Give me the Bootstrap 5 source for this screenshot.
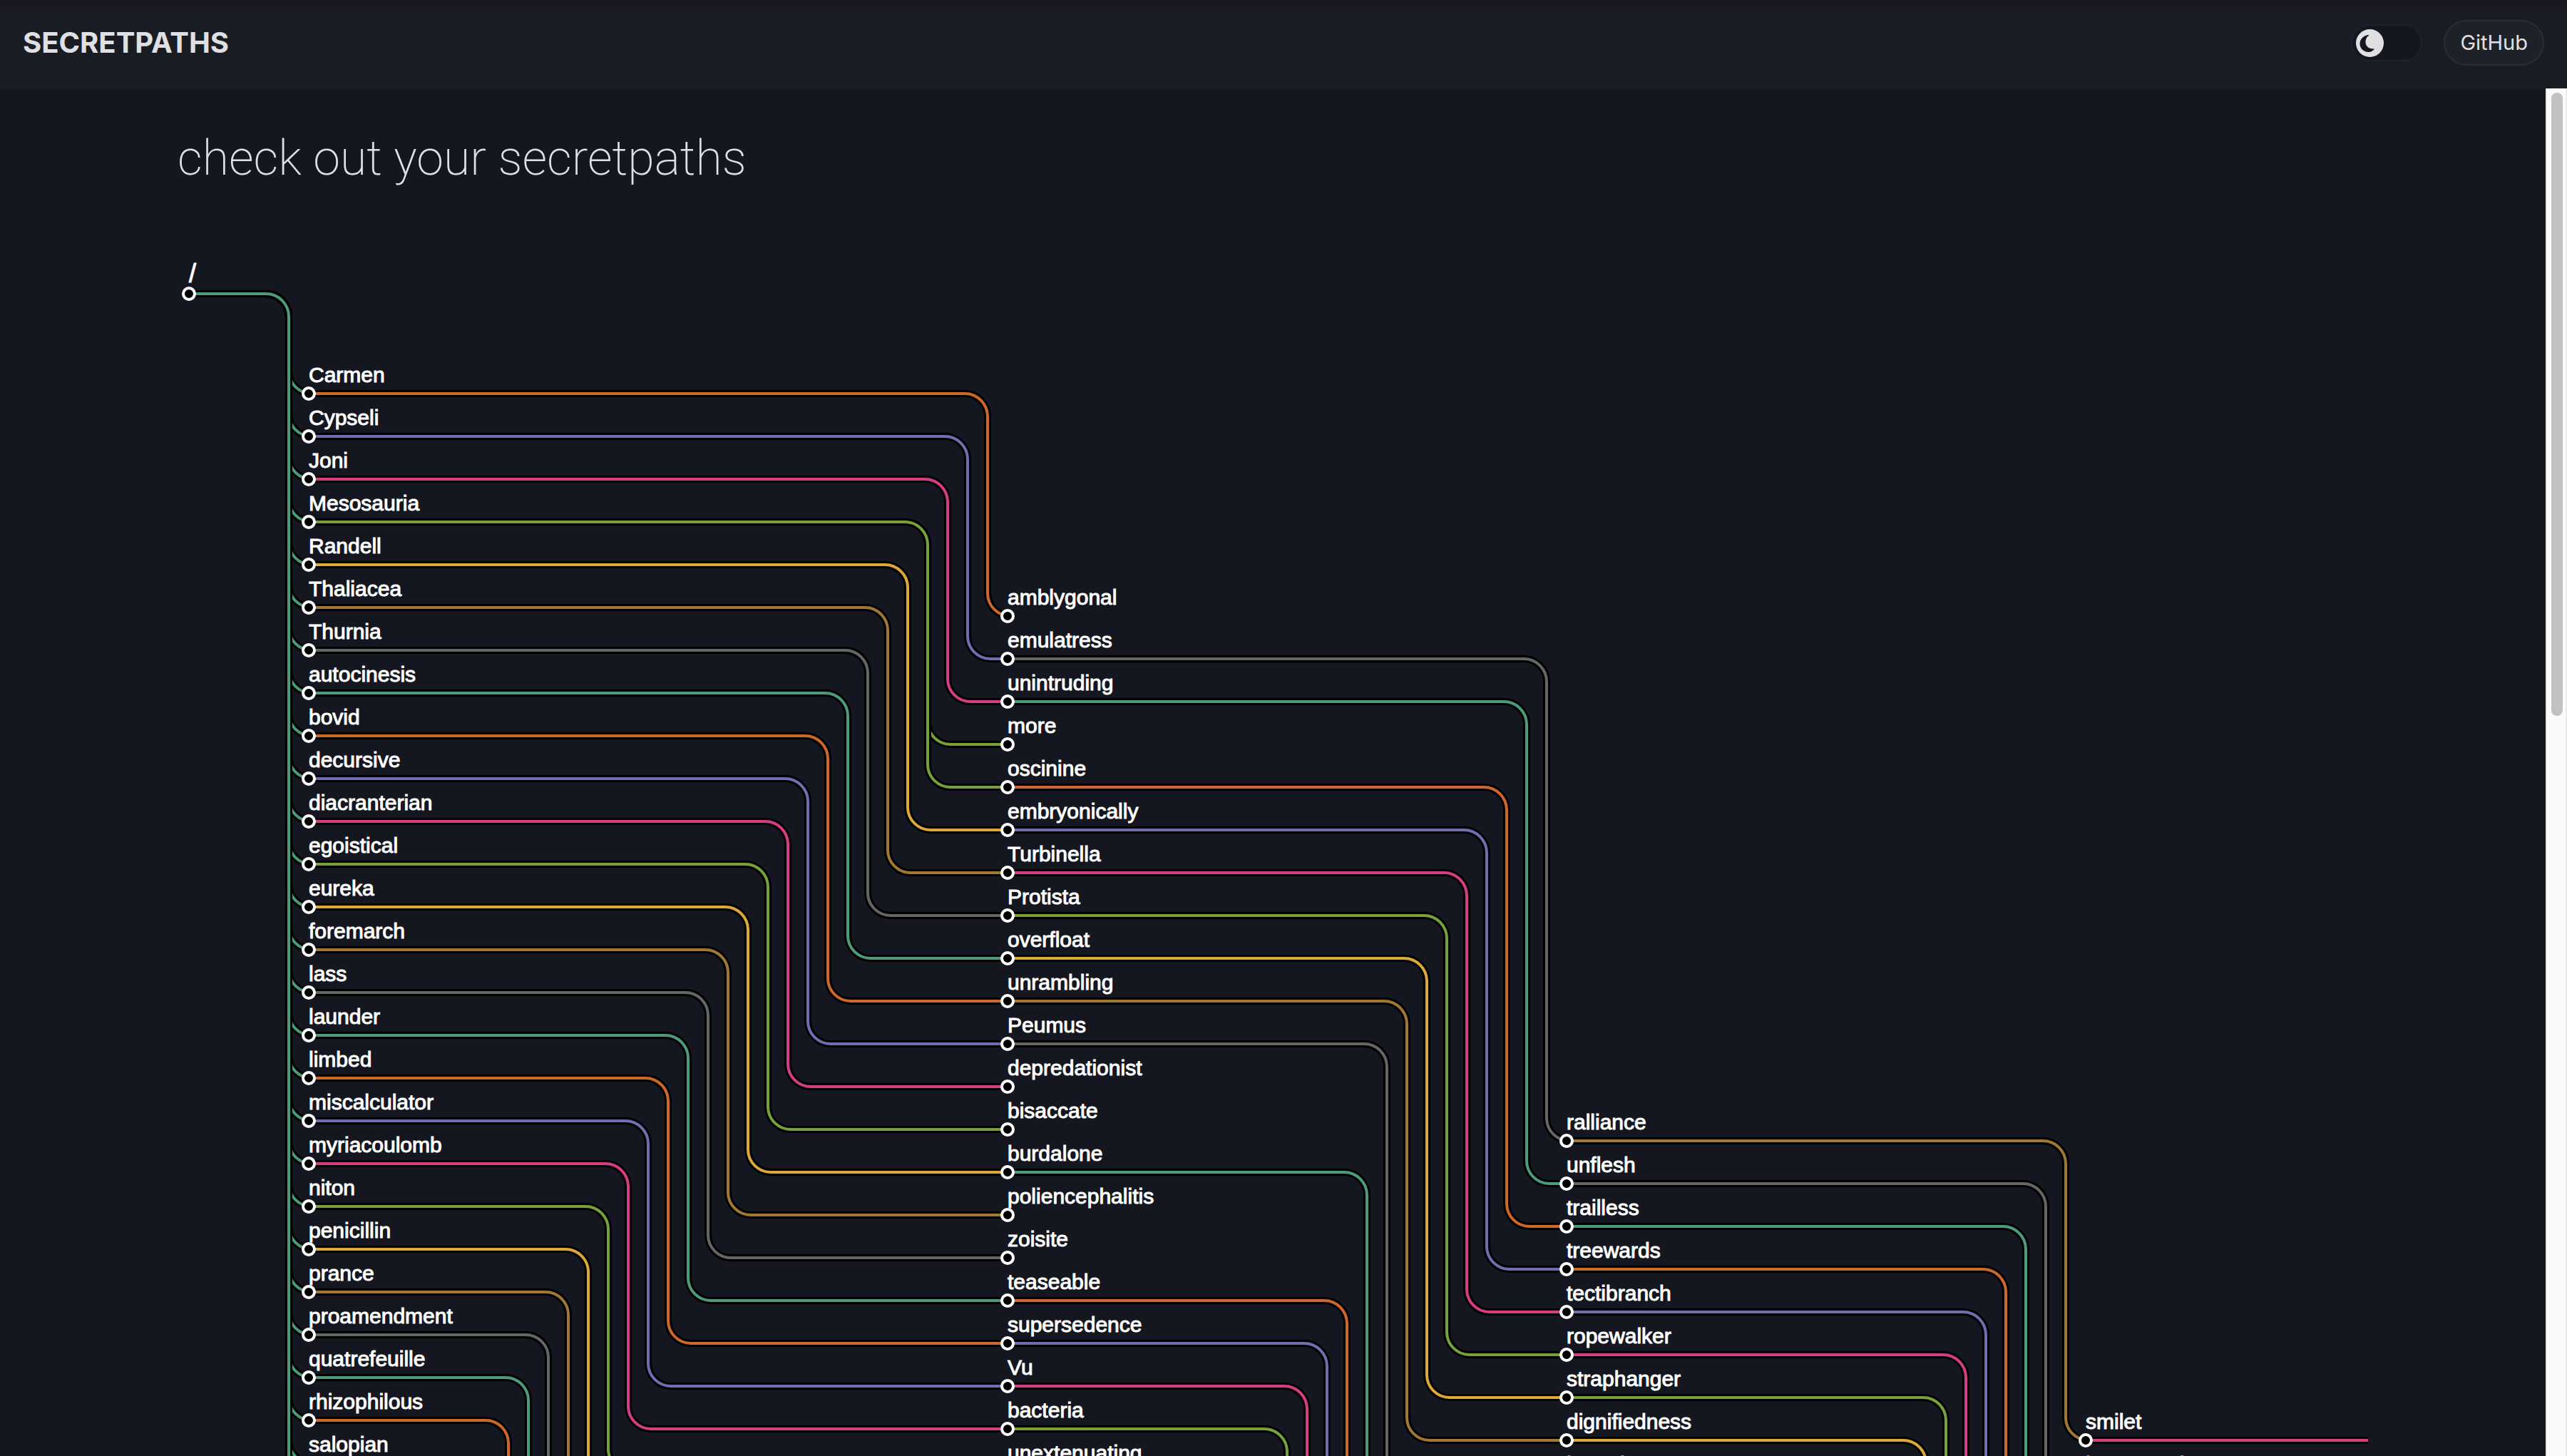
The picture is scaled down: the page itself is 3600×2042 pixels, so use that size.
<!DOCTYPE html>
<html lang="en" data-bs-theme="dark">
<head>
<meta charset="utf-8">
<meta name="viewport" content="width=device-width, initial-scale=1">
<title>secretpaths</title>
<link rel="stylesheet" href="https://cdn.jsdelivr.net/npm/bootstrap@5.3.0/dist/css/bootstrap.min.css">
<style>
  body { background: #14171f; color: #e0e0e3; font-family: Inter, "Liberation Sans", sans-serif; }
  .topbar { height: 124px; padding: 0 32px 4px; background: linear-gradient(#16151f, #1a1c24 24px); }
  .brand { font-size: 40px; line-height: 48px; font-weight: 700; color: #e0e0e3; text-decoration: none; }
  .bar-tools { gap: 30px; }
  .theme-switch { width: 100px; height: 52px; padding: 5px; background: #14171f; border: 2px solid #1f212c; border-radius: 26px; }
  .theme-switch svg { width: 39px; height: 39px; display: block; }
  .btn-pill { height: 64px; padding: 0 21px; font-size: 29px; line-height: 60px; color: #e0e0e3; background: #1f2129; border: 2px solid #2a2b3c; border-radius: 32px; }
  .page-body { min-height: 0; }
  .sheet { width: 100%; max-width: 3072px; padding-top: 56px; }
  .headline { font-family: Roboto, Inter, sans-serif; font-size: 68px; line-height: 84px; font-weight: 200; margin: 0 0 76px; color: #e0e0e3; }
  .tree { display: block; width: 100%; height: 4000px; font-family: "Liberation Sans", Arial, sans-serif; font-size: 30px; }
  .tree path { fill: none; }
  .tree text { fill: #fff; stroke: #fff; stroke-width: 1px; }
  .tree .root-label { font-size: 36px; }
  .rail { width: 30px; background: #fafafa; border-left: 2px solid #e8e8e8; border-right: 2px solid #ebebeb; padding: 6px 4px 0 6px; }
  .rail-thumb { width: 16px; height: 874px; border-radius: 8px; background: #c1c1c1; }
</style>
<script src="https://cdn.jsdelivr.net/npm/bootstrap@5.3.0/dist/js/bootstrap.bundle.min.js"></script>
</head>
<body class="vh-100 d-flex flex-column overflow-hidden">
<header class="topbar d-flex align-items-center justify-content-between flex-shrink-0">
  <a class="brand" href="#">SECRETPATHS</a>
  <div class="bar-tools d-flex align-items-center">
    <button type="button" class="theme-switch" role="switch" aria-checked="false" aria-label="Toggle theme">
      <svg viewBox="0 0 39 39" aria-hidden="true"><circle cx="19.500" cy="19.500" r="19.500" fill="#e0e0e3"/><path d="M18 8C12 8 5.500 13 5.500 20.500C5.500 27 11 32 17.500 32C21 32 24.500 30 26 27.500C18 28 13.500 23.500 13.500 18C13.500 14 15 10.500 18.500 8.500Z" fill="#14171f"/></svg>
    </button>
    <a class="btn btn-pill" href="#" role="button">GitHub</a>
  </div>
</header>
<div class="page-body d-flex flex-grow-1">
  <main class="flex-grow-1 overflow-hidden d-flex justify-content-center">
    <div class="sheet">
      <h1 class="headline">check out your secretpaths</h1>
      <svg class="tree" id="tree" role="img" aria-label="Tree of paths"></svg>
    </div>
  </main>
  <div class="rail flex-shrink-0"><div class="rail-thumb"></div></div>
</div>
<script>
  const palette = { teal: '#4d9b7b', orange: '#cd672b', purple: '#716eb0', pink: '#d43d87', green: '#76a23a', yellow: '#dba937', brown: '#a07733', gray: '#666666' };
  const hues = Object.keys(palette);
  const ROW = 60, LANE = 28, R = 32;
  const columns = [
    { x: 16, y: 72, names: ['/'] },
    { x: 184, y: 212, names: ['Carmen','Cypseli','Joni','Mesosauria','Randell','Thaliacea','Thurnia','autocinesis','bovid','decursive','diacranterian','egoistical','eureka','foremarch','lass','launder','limbed','miscalculator','myriacoulomb','niton','penicillin','prance','proamendment','quatrefeuille','rhizophilous','salopian'] },
    { x: 1164, y: 524, names: ['amblygonal','emulatress','unintruding','more','oscinine','embryonically','Turbinella','Protista','overfloat','unrambling','Peumus','depredationist','bisaccate','burdalone','poliencephalitis','zoisite','teaseable','supersedence','Vu','bacteria','unextenuating'] },
    { x: 1948, y: 1260, names: ['ralliance','unflesh','trailless','treewards','tectibranch','ropewalker','straphanger','dignifiedness','hypoderm'] },
    { x: 2676, y: 1680, names: ['smilet','hexagonal'] }
  ];
  const at = (c, i) => ({ x: columns[c].x, y: columns[c].y + i * ROW });
  const links = [];
  const link = (c, from, to, lane, hue) => links.push({ a: at(c, from), b: at(c + 1, to), x: columns[c + 1].x - LANE * (lane + 1), hue: hues[hue % 8] });

  // the trunk runs on past the last named row
  for (let i = 0; i < columns[1].names.length + 4; i++) link(0, 0, i, 0, 0);
  for (let i = 0; i < 25; i++) {
    if (i === 3) link(1, 3, 3, 3, 4);
    link(1, i, i < 3 ? i : i + 1, i, i + 1);
  }
  [1, 2, 4, 5, 6, 7, 8, 9, 10, 13, 16, 17, 18, 19].forEach((from, k) => link(2, from, k, k, k + 7));
  for (let k = 0; k < 8; k++) link(3, k, k, k, k + 6);

  let out = '';
  const stroke = (d, hue) => `<path d="${d}" stroke="#000" stroke-width="10"/><path d="${d}" stroke="${palette[hue]}" stroke-width="4"/>`;
  for (const { a, b, x, hue } of links) {
    out += stroke(`M${a.x} ${a.y}H${x - R}A${R} ${R} 0 0 1 ${x} ${a.y + R}V${b.y - R}A${R} ${R} 0 0 0 ${x + R} ${b.y}H${b.x}`, hue);
  }
  out += stroke('M2676 1680H3400', 'pink');
  columns.forEach((col, c) => col.names.forEach((name, i) => {
    const p = at(c, i);
    out += `<circle cx="${p.x}" cy="${p.y}" r="8" fill="#000" stroke="#fff" stroke-width="4"/><text${c === 0 ? ' class="root-label"' : ''} x="${p.x}" y="${p.y - 16}">${name}</text>`;
  }));
  document.getElementById('tree').innerHTML = out;
</script>
</body>
</html>
